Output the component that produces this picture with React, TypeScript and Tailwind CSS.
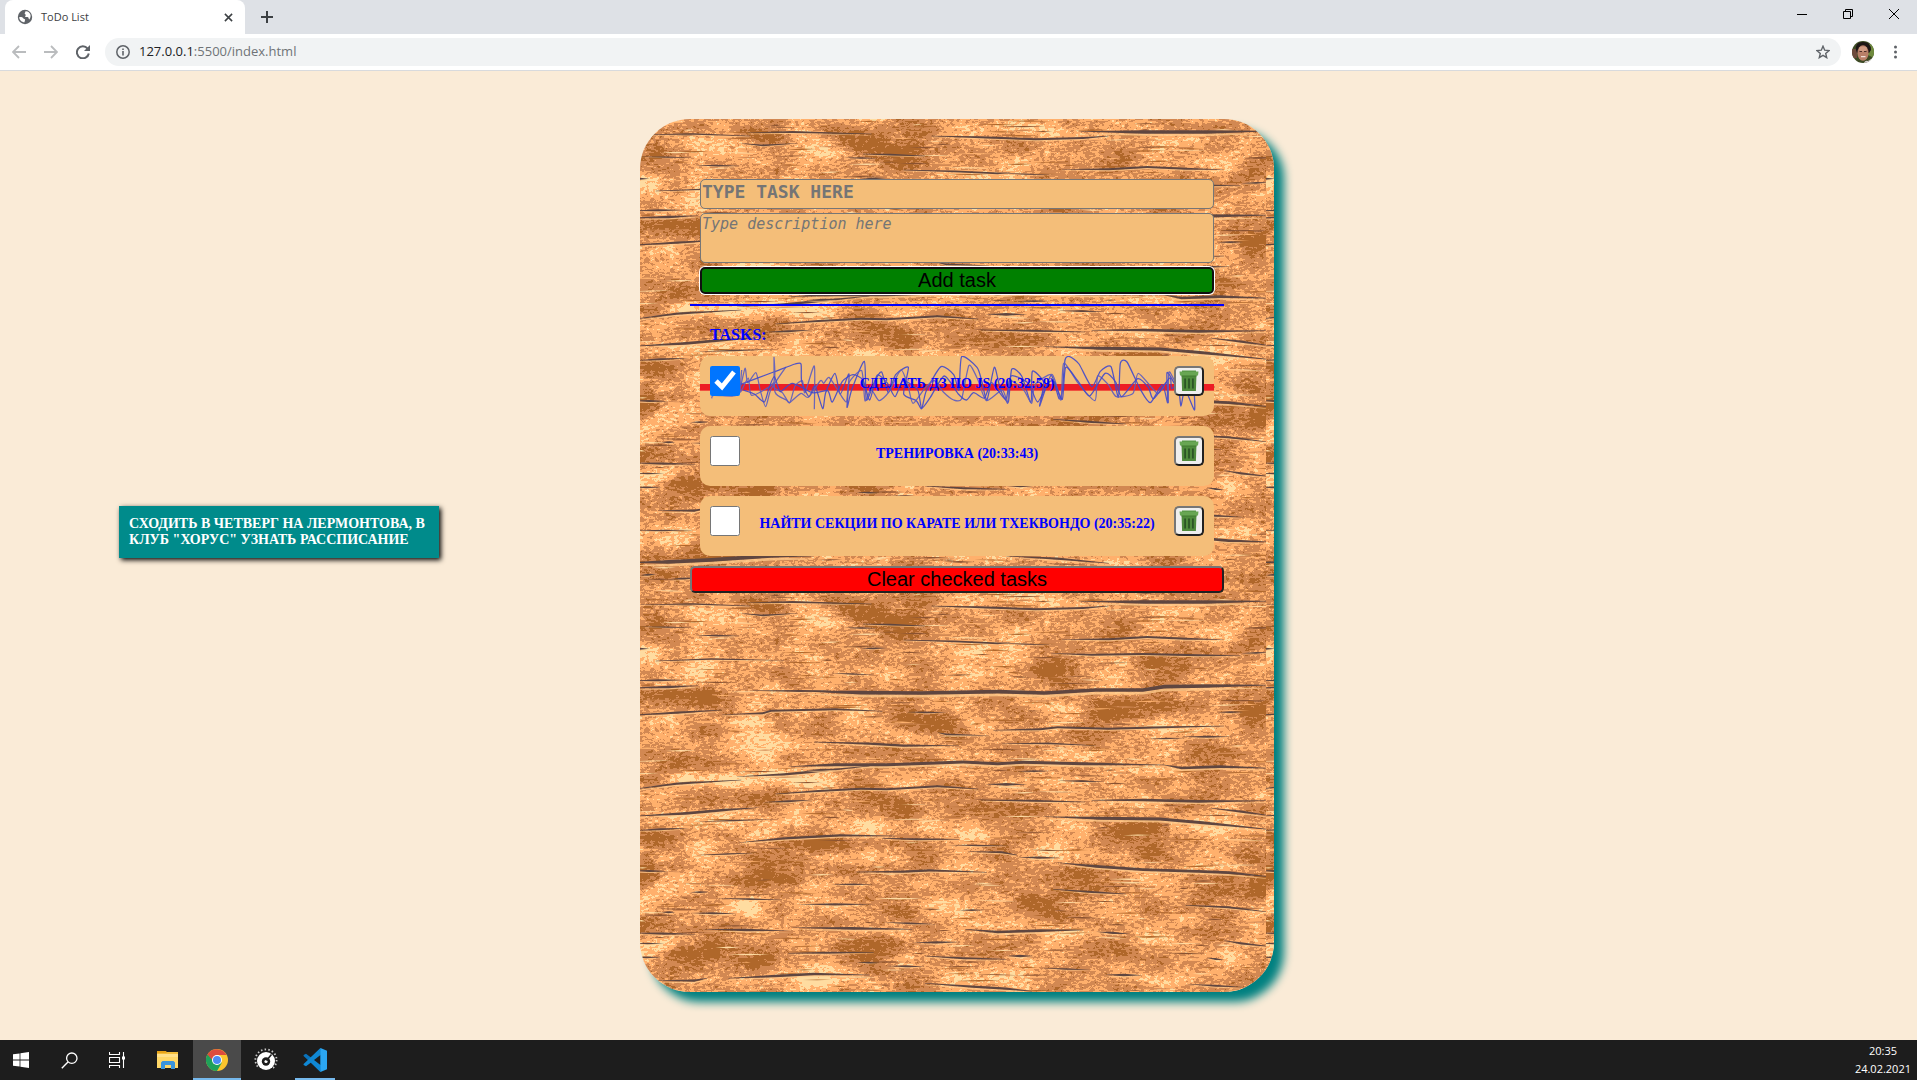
import { useState } from "react";
import type { FormEvent, ReactNode } from "react";

type Crack = { t: number; p: number[] };

const cracks: Crack[] = [
  { t: 3, p: [23, 44, 150, 42, 280, 48] },
  { t: 4, p: [275, 38, 380, 36, 565, 42] },
  { t: 4, p: [705, 48, 820, 52, 950, 58, 1060, 54, 1120, 48] },
  { t: 8, p: [1050, 34, 1200, 36, 1350, 36, 1500, 33] },
  { t: 3, p: [260, 70, 310, 76, 390, 70] },
  { t: 2, p: [23, 110, 150, 113] },
  { t: 3, p: [150, 136, 260, 138] },
  { t: 3, p: [640, 150, 760, 154, 860, 160, 890, 158] },
  { t: 2, p: [860, 160, 990, 165] },
  { t: 4, p: [1010, 148, 1120, 148, 1210, 141, 1300, 146, 1390, 149] },
  { t: 4, p: [985, 190, 1080, 194, 1200, 192, 1330, 196, 1430, 197] },
  { t: 3, p: [1430, 190, 1500, 187] },
  { t: 4, p: [0, 177, 45, 176] },
  { t: 3, p: [60, 213, 190, 207, 360, 211] },
  { t: 3, p: [470, 250, 570, 254] },
  { t: 4, p: [0, 272, 135, 270] },
  { t: 5, p: [0, 294, 90, 291, 160, 287] },
  { t: 4, p: [280, 302, 400, 303, 470, 302] },
  { t: 9, p: [400, 303, 540, 308, 680, 309, 860, 305, 970, 309, 1090, 300, 1200, 300, 1250, 290, 1350, 288, 1500, 285] },
  { t: 5, p: [0, 376, 110, 368, 215, 360] },
  { t: 4, p: [215, 374, 310, 370, 330, 362, 480, 358, 590, 364] },
  { t: 3, p: [645, 366, 740, 368] },
  { t: 3, p: [1375, 367, 1435, 366] },
  { t: 4, p: [850, 421, 960, 418, 1000, 412, 1120, 416, 1250, 412, 1390, 408] },
  { t: 3, p: [545, 102, 610, 104, 690, 108] },
  { t: 3, p: [500, 113, 580, 115] },
  { t: 3, p: [540, 176, 600, 174] },
  { t: 3, p: [720, 428, 740, 433, 840, 437] },
  { t: 3, p: [1210, 447, 1300, 444] },
  { t: 4, p: [1290, 440, 1410, 440] },
  { t: 5, p: [430, 456, 560, 461, 640, 467, 770, 467] },
  { t: 3, p: [870, 461, 980, 460, 1090, 467] },
  { t: 7, p: [370, 530, 480, 524, 600, 524, 780, 516, 860, 521, 920, 517, 1060, 521, 1250, 525] },
  { t: 6, p: [1245, 524, 1290, 534, 1380, 530, 1500, 535] },
  { t: 5, p: [250, 560, 360, 553, 420, 546, 560, 528] },
  { t: 4, p: [410, 541, 490, 537] },
  { t: 5, p: [0, 599, 110, 581, 260, 570] },
  { t: 3, p: [905, 544, 985, 543] },
  { t: 6, p: [830, 583, 930, 583] },
  { t: 3, p: [1000, 572, 1110, 575] },
  { t: 4, p: [340, 612, 440, 603, 540, 596, 600, 598, 720, 589, 815, 597] },
  { t: 4, p: [310, 637, 430, 630] },
  { t: 4, p: [820, 630, 940, 632, 1065, 636] },
  { t: 6, p: [1080, 631, 1200, 630, 1330, 634, 1500, 632] },
  { t: 6, p: [0, 679, 130, 670, 220, 660, 300, 653] },
  { t: 3, p: [150, 695, 340, 688] },
  { t: 4, p: [0, 722, 140, 714] },
  { t: 7, p: [965, 680, 1100, 685, 1240, 687, 1340, 698, 1500, 719] },
  { t: 5, p: [1360, 655, 1430, 665, 1500, 678] },
  { t: 5, p: [255, 758, 360, 745, 490, 736, 620, 738] },
  { t: 4, p: [590, 745, 670, 748, 770, 748] },
  { t: 3, p: [740, 765, 890, 768] },
  { t: 4, p: [790, 785, 870, 787, 905, 795] },
  { t: 5, p: [905, 802, 1010, 804] },
  { t: 6, p: [1000, 818, 1090, 829, 1200, 839, 1330, 844, 1400, 848, 1500, 861] },
  { t: 4, p: [0, 842, 90, 844] },
  { t: 5, p: [530, 846, 640, 845, 700, 841, 835, 847] },
  { t: 3, p: [150, 796, 300, 788] },
  { t: 3, p: [470, 883, 570, 883] },
  { t: 3, p: [140, 907, 185, 906] },
  { t: 4, p: [990, 898, 1080, 906, 1160, 912] },
  { t: 3, p: [200, 925, 360, 930] },
  { t: 4, p: [1300, 946, 1400, 952, 1500, 967] },
  { t: 5, p: [390, 943, 570, 943] },
  { t: 4, p: [75, 967, 105, 967] },
  { t: 4, p: [140, 969, 250, 971] },
  { t: 3, p: [770, 961, 830, 960] },
  { t: 3, p: [590, 997, 720, 1003] },
  { t: 5, p: [165, 1018, 380, 1022] },
  { t: 6, p: [380, 1013, 520, 1015, 660, 1018] },
  { t: 6, p: [785, 1018, 860, 1026, 960, 1022, 1060, 1020] },
  { t: 5, p: [1090, 1025, 1170, 1032] },
  { t: 5, p: [0, 1029, 160, 1033] },
  { t: 5, p: [660, 1058, 775, 1056] },
  { t: 3, p: [0, 1060, 80, 1061] },
  { t: 5, p: [1390, 1052, 1430, 1060, 1500, 1070] },
  { t: 4, p: [370, 1090, 460, 1088, 570, 1087] },
  { t: 4, p: [690, 1098, 780, 1105, 880, 1108] },
  { t: 5, p: [880, 1098, 945, 1098] },
  { t: 3, p: [0, 1102, 75, 1102] },
  { t: 4, p: [1350, 1104, 1390, 1110] },
  { t: 3, p: [530, 1117, 585, 1119] },
  { t: 4, p: [600, 1128, 690, 1130] },
  { t: 3, p: [960, 1134, 1080, 1140] },
  { t: 5, p: [1110, 1154, 1200, 1156] },
  { t: 5, p: [65, 1172, 150, 1172, 180, 1165] },
  { t: 5, p: [230, 1165, 340, 1158, 430, 1152, 560, 1155] },
  { t: 5, p: [690, 1180, 800, 1190, 880, 1196, 940, 1204] },
  { t: 4, p: [1300, 1182, 1440, 1192] },
  { t: 3, p: [0, 1233, 150, 1230] },
  { t: 9, p: [0, 1328, 90, 1326, 190, 1320, 330, 1308, 430, 1308] },
  { t: 5, p: [880, 1308, 1000, 1316, 1120, 1330] },
  { t: 4, p: [23, 1366, 60, 1363] },
  { t: 4, p: [90, 1378, 160, 1374] },
  { t: 6, p: [1080, 1240, 1260, 1246, 1400, 1262, 1500, 1266] },
];

// x, y, rx, ry
const darkSpots = [
  [120, 328, 120, 34], [780, 90, 50, 24], [590, 60, 110, 50], [975, 215, 45, 50], [640, 130, 60, 26],
  [1440, 345, 55, 55], [165, 525, 55, 24], [600, 660, 90, 34], [720, 610, 50, 18], [1205, 745, 50, 60],
  [350, 805, 70, 34], [200, 1105, 130, 46], [50, 755, 50, 34], [1080, 875, 110, 50], [1430, 890, 90, 40],
  [635, 980, 55, 34], [1060, 445, 50, 40], [690, 385, 80, 40], [1250, 235, 90, 34], [880, 660, 120, 30],
  [1350, 490, 70, 30], [960, 955, 60, 40], [560, 1070, 90, 40], [450, 760, 150, 24], [1460, 790, 40, 40],
  [90, 1010, 90, 16], [40, 840, 30, 60], [180, 1300, 130, 26], [60, 1360, 70, 30], [1380, 1130, 60, 20],
  [290, 50, 80, 26], [1180, 360, 130, 34], [300, 870, 110, 20], [1200, 1290, 120, 30],
];
const lightSpots = [
  [130, 200, 130, 50], [440, 260, 70, 22], [430, 460, 60, 26], [270, 460, 110, 44], [830, 240, 80, 22],
  [250, 680, 160, 34], [750, 545, 60, 22], [820, 735, 40, 22], [1140, 650, 120, 20], [970, 1090, 80, 34],
  [740, 960, 50, 60], [520, 1000, 34, 40], [120, 880, 60, 44], [1440, 1095, 60, 44], [800, 180, 50, 26],
  [180, 70, 110, 24], [900, 30, 140, 20], [1180, 545, 110, 18], [250, 570, 160, 24], [1210, 1060, 60, 34],
  [260, 960, 60, 26], [1000, 630, 100, 20], [1330, 830, 120, 14], [80, 1250, 90, 40], [400, 1180, 90, 20],
  [1350, 60, 110, 16], [100, 620, 80, 20], [200, 395, 160, 14],
];

function sliver(p: number[], t: number, dy: number) {
  const n = p.length / 2;
  const top: string[] = [];
  const bottom: string[] = [];
  for (let i = 0; i < n; i++) {
    const half = i === 0 || i === n - 1 ? 0.6 : t / 2;
    top.push(`${p[i * 2]} ${p[i * 2 + 1] - half + dy}`);
    bottom.unshift(`${p[i * 2]} ${p[i * 2 + 1] + half + dy}`);
  }
  if (n === 2) {
    const mx = (p[0] + p[2]) / 2;
    const my = (p[1] + p[3]) / 2 + dy;
    return `M${p[0]} ${p[1] + dy}L${mx} ${my - t / 2}L${p[2]} ${p[3] + dy}L${mx} ${my + t / 2}Z`;
  }
  return `M${top.join("L")}L${bottom.join("L")}Z`;
}

const streakTones = ["#b0672b", "#b0672b", "#ffdca2", "#ffb26e", "#8a5230", "#d38a55"];

function makeStreaks(count: number) {
  let seed = 71;
  const next = () => {
    seed = (seed * 16807) % 2147483647;
    return seed / 2147483647;
  };
  return Array.from({ length: count }, () => {
    const x = next() * 1460;
    const y = next() * 1400;
    const len = 20 + next() * 90;
    const slope = (next() - 0.5) * 6;
    return {
      d: sliver([x, y, x + len, y + slope], 2.4 + next() * 2.4, 0),
      fill: streakTones[Math.floor(next() * streakTones.length)],
    };
  });
}

const streaks = makeStreaks(620);

function Wood() {
  return (
    <svg className="absolute inset-0 h-full w-full rounded-[50px]" aria-hidden="true">
      <defs>
        <filter id="soften" x="-60%" y="-60%" width="220%" height="220%">
          <feGaussianBlur stdDeviation="16 9" />
        </filter>
        <filter id="grain" filterUnits="userSpaceOnUse" x="0" y="0" width="626" height="470" colorInterpolationFilters="sRGB">
          <feTurbulence type="fractalNoise" baseFrequency="0.02 0.04" numOctaves="5" seed="31" result="wide" />
          <feColorMatrix in="wide" values="1 0 0 0 0 1 0 0 0 0 1 0 0 0 0 0 0 0 0 1" result="wideGray" />
          <feTurbulence type="fractalNoise" baseFrequency="0.2 0.4" numOctaves="3" seed="9" result="fine" />
          <feColorMatrix in="fine" values="1 0 0 0 0 1 0 0 0 0 1 0 0 0 0 0 0 0 0 1" result="fineGray" />
          <feComposite in="wideGray" in2="fineGray" operator="arithmetic" k2="0.6" k3="0.5" k4="-0.05" result="noise" />
          <feComposite in="SourceGraphic" in2="noise" operator="arithmetic" k2="1" k3="1" k4="-0.5" result="sum" />
          <feColorMatrix in="sum" values="1 0 0 0 0 0 1 0 0 0 0 0 1 0 0 0 0 0 0 1" />
          <feComponentTransfer>
            <feFuncR type="discrete" tableValues=".69 .69 .69 .69 .69 .69 .69 .69 .827 .827 .827 1 1 1 1 1 1 1 1 1" />
            <feFuncG type="discrete" tableValues=".404 .404 .404 .404 .404 .404 .404 .404 .537 .537 .537 .694 .694 .694 .863 .863 .863 .863 .863 .863" />
            <feFuncB type="discrete" tableValues=".165 .165 .165 .165 .165 .165 .165 .165 .325 .325 .325 .427 .427 .427 .63 .63 .63 .63 .63 .63" />
          </feComponentTransfer>
        </filter>
        <pattern id="planks" patternUnits="userSpaceOnUse" width="626" height="470">
          <g filter="url(#grain)">
            <rect width="626" height="470" fill="#8b8b8b" />
            <g transform="scale(0.4273 0.3333) translate(-23 3)" filter="url(#soften)">
              {darkSpots.map(([x, y, rx, ry]) => (
                <ellipse key={`${x}-${y}`} cx={x} cy={y} rx={rx} ry={ry} fill="#565656" opacity="0.75" />
              ))}
              {lightSpots.map(([x, y, rx, ry]) => (
                <ellipse key={`${x}-${y}`} cx={x} cy={y} rx={rx} ry={ry} fill="#b4b4b4" opacity="0.75" />
              ))}
            </g>
          </g>
          <g transform="scale(0.4273 0.3333) translate(-23 3)">
            {streaks.map((s, i) => (
              <path key={i} d={s.d} fill={s.fill} />
            ))}
            {cracks.map((c, i) => (
              <g key={i}>
                <path d={sliver(c.p, c.t, c.t)} fill="#ffc98a" opacity="0.8" />
                <path d={sliver(c.p, c.t + 2, 0)} fill="#5f4640" />
              </g>
            ))}
          </g>
        </pattern>
      </defs>
      <rect width="100%" height="100%" fill="url(#planks)" />
    </svg>
  );
}

const scribbles = [
  [50, 145, 56, 136, 112, 138, 132, 128, 150, 55, 158, 98, 183, 68, 196, 122, 212, 170, 228, 118, 272, 52, 236, 108, 262, 128, 284, 158, 300, 108, 322, 92, 330, 128, 358, 48, 358, 178],
  [135, 104, 236, 66, 300, 42, 318, 42, 320, 94, 342, 140, 360, 108, 383, 176, 392, 128, 420, 70, 436, 132, 462, 72, 456, 172, 470, 120, 508, 34, 514, 150, 540, 92, 560, 66, 580, 128, 602, 74, 640, 52, 626, 132, 664, 152, 680, 176, 694, 122, 738, 50, 776, 74, 792, 120, 800, 20, 846, 52, 860, 92, 876, 150, 898, 52, 916, 118, 940, 156, 950, 58, 980, 78, 1008, 158, 1012, 64, 1046, 98, 1034, 168, 1068, 76, 1092, 146, 1102, 122, 1110, 30, 1124, 20, 1152, 42, 1190, 110, 1216, 64, 1248, 50, 1270, 142, 1276, 40, 1296, 36, 1336, 118, 1366, 158, 1402, 104, 1418, 158, 1416, 68, 1438, 100, 1452, 124, 1458, 168, 1470, 118, 1498, 180, 1498, 130],
  [140, 60, 136, 126, 160, 84, 170, 136, 236, 98, 237, 22, 240, 126, 274, 150, 284, 158, 318, 130, 340, 142, 376, 92, 386, 100, 402, 82, 428, 120, 454, 156, 462, 98, 500, 62, 510, 152, 528, 118, 552, 152, 580, 128, 618, 60, 640, 112, 654, 160, 690, 114, 718, 92, 745, 126, 776, 150, 800, 146, 822, 46, 848, 88, 874, 152, 922, 120, 938, 160, 944, 92, 986, 120, 1010, 160, 1020, 104, 1072, 74, 1098, 150, 1106, 40, 1150, 100, 1200, 152, 1208, 78, 1240, 104, 1264, 140, 1314, 130, 1330, 70, 1388, 130, 1416, 96, 1420, 158, 1422, 66, 1448, 108, 1484, 126],
  [145, 120, 178, 132, 208, 156, 222, 114, 238, 80, 256, 124, 292, 100, 352, 128, 398, 122, 412, 156, 442, 94, 474, 74, 504, 90, 524, 150, 546, 76, 576, 98, 600, 140, 624, 92, 668, 120, 680, 174, 706, 142, 748, 78, 790, 132, 814, 150, 836, 128, 868, 144, 890, 98, 932, 148, 948, 78, 1000, 100, 1028, 156, 1060, 98, 1078, 96, 1102, 148, 1112, 52, 1148, 92, 1184, 138, 1230, 70, 1262, 96, 1280, 140, 1328, 86, 1360, 112, 1376, 146, 1424, 84, 1430, 116, 1454, 92],
];

// Catmull-Rom spline through the points, slightly tightened
function smooth(p: number[]) {
  const n = p.length / 2;
  const at = (i: number) => {
    const k = Math.max(0, Math.min(n - 1, i));
    return [p[k * 2], p[k * 2 + 1]];
  };
  let d = `M${p[0]} ${p[1]}`;
  for (let i = 0; i < n - 1; i++) {
    const [a, b, c, e] = [at(i - 1), at(i), at(i + 1), at(i + 2)];
    d += `C${b[0] + (c[0] - a[0]) / 9} ${b[1] + (c[1] - a[1]) / 9} ${c[0] - (e[0] - b[0]) / 9} ${c[1] - (e[1] - b[1]) / 9} ${c[0]} ${c[1]}`;
  }
  return d;
}

function CrossedOut() {
  return (
    <svg className="absolute inset-0 h-full w-full" viewBox="15 18 1542 180" preserveAspectRatio="none" aria-hidden="true">
      <rect x="15" y="102" width="1542" height="20" fill="#ed1c24" />
      {scribbles.map((p, i) => (
        <path
          key={i}
          d={smooth(p)}
          fill="none"
          stroke={i % 2 ? "#3f48cc" : "#5c5cc0"}
          strokeOpacity="0.9"
          strokeWidth="3.8"
          strokeLinejoin="round"
        />
      ))}
    </svg>
  );
}

function TrashIcon() {
  return (
    <svg viewBox="0 0 22 24" className="h-6 w-[22px]" aria-hidden="true">
      <path d="M3.500 5h15l-.6 17H4.100z" fill="#4f8b3c" />
      <path d="M3.500 6h15v1.500h-15z" fill="#427a31" />
      <path d="M1.500 2.500h19l-.5 4H2z" fill="#68a653" />
      <path d="M4 1.500h14v1.500H4z" fill="#5b9a49" />
      <path d="M6.200 9.500h1.800v10H6.200zM10.100 9.500h1.800v10h-1.800zM14 9.500h1.800v10H14z" fill="#2c5526" />
    </svg>
  );
}

function TabBar() {
  return (
    <header className="flex h-[34px] items-stretch bg-[#dee1e6]">
      <div className="relative ml-[5px] flex w-60 items-center rounded-t-lg bg-white pr-3 pl-3 font-['Open_Sans',sans-serif] text-[#3c4043]">
        <svg viewBox="0 0 16 16" className="size-4" aria-hidden="true">
          <circle cx="8" cy="8" r="7.200" fill="#5f6368" />
          <path d="M2.200 8.200c1.800-.4 3.400.2 4.200 1.200.5.6 1.500.3 1.700 1.100.2.900-.6 1.300-.5 2.700-3 0-5.200-2.200-5.400-5zM8.300 2.300c.6.900-.5 1.300-.6 2.100-.1.800 1 .6 1.100 1.500.1.800-.9.900-.7 1.600.4 1 2.200.2 3 .8.700.6.400 1.700 1.200 2.200 1.200-1.500 1.700-3.400 1-5.200-.6-1.700-2.200-3.300-5-3z" fill="#fff" />
        </svg>
        <span className="ml-2 flex-1 text-[11px]">ToDo List</span>
        <button type="button" aria-label="Close tab" className="p-0">
          <svg viewBox="0 0 10 10" className="size-[9px]" aria-hidden="true">
            <path d="M1 1l8 8M9 1L1 9" stroke="#3c4043" strokeWidth="1.700" />
          </svg>
        </button>
      </div>
      <button type="button" aria-label="New tab" className="ml-4 self-center">
        <svg viewBox="0 0 12 12" className="size-3" aria-hidden="true">
          <path d="M6 0v12M0 6h12" stroke="#3c4043" strokeWidth="2" />
        </svg>
      </button>
      <div className="ml-auto flex items-center pb-1.5">
        <button type="button" aria-label="Minimize" className="flex w-[46px] justify-center">
          <svg viewBox="0 0 10 10" className="size-2.5" aria-hidden="true">
            <path d="M0 5.500h10" stroke="#000" />
          </svg>
        </button>
        <button type="button" aria-label="Restore" className="flex w-[46px] justify-center">
          <svg viewBox="0 0 10 10" className="size-2.5" aria-hidden="true">
            <path d="M.5 2.500h7v7h-7zM2.500 2.500v-2h7v7h-2" fill="none" stroke="#000" />
          </svg>
        </button>
        <button type="button" aria-label="Close" className="flex w-[46px] justify-center">
          <svg viewBox="0 0 10 10" className="size-2.5" aria-hidden="true">
            <path d="M0 0l10 10M10 0L0 10" stroke="#000" />
          </svg>
        </button>
      </div>
    </header>
  );
}

function Toolbar() {
  return (
    <nav className="flex h-[37px] items-center border-b border-[#d8dadd] bg-white pl-3">
      <button type="button" aria-label="Back">
        <svg viewBox="0 0 14 14" className="size-3.5" aria-hidden="true">
          <path d="M14 7H1.500M7 1L1 7l6 6" fill="none" stroke="#babcbe" strokeWidth="1.800" />
        </svg>
      </button>
      <button type="button" aria-label="Forward" className="ml-[18px]">
        <svg viewBox="0 0 14 14" className="size-3.5" aria-hidden="true">
          <path d="M0 7h12.500M7 1l6 6-6 6" fill="none" stroke="#babcbe" strokeWidth="1.800" />
        </svg>
      </button>
      <button type="button" aria-label="Reload" className="ml-[18px]">
        <svg viewBox="0 0 14 14" className="size-3.5" aria-hidden="true">
          <path d="M11.600 3.600A6 6 0 1 0 12.800 8.500" fill="none" stroke="#5f6368" strokeWidth="2" />
          <path d="M14 0v6H8z" fill="#5f6368" />
        </svg>
      </button>
      <div className="ml-[15px] flex h-7 flex-1 items-center rounded-full bg-[#f1f3f4] px-[11px]">
        <svg viewBox="0 0 14 14" className="size-3.5" aria-hidden="true">
          <circle cx="7" cy="7" r="6.200" fill="none" stroke="#5f6368" strokeWidth="1.500" />
          <path d="M6.200 6h1.600v4.500H6.200zM6.200 3.500h1.600V5H6.200z" fill="#5f6368" />
        </svg>
        <span className="ml-[9px] flex-1 font-['Open_Sans',sans-serif] text-[13px] text-[#6f7377]">
          <span className="text-[#202124]">127.0.0.1</span>:5500/index.html
        </span>
        <button type="button" aria-label="Bookmark this page">
          <svg viewBox="0 0 14 14" className="size-3.5" aria-hidden="true">
            <path d="M7 1.200l1.700 4 4.300.4-3.300 2.800 1 4.200L7 10.300l-3.700 2.300 1-4.200L1 5.600l4.300-.4z" fill="none" stroke="#5f6368" strokeWidth="1.400" />
          </svg>
        </button>
      </div>
      <svg viewBox="0 0 22 22" className="ml-[11px] size-[22px] rounded-full" role="img" aria-label="Profile">
        <rect width="22" height="22" fill="#3d4a24" />
        <path d="M13 3h9v14l-6-3z" fill="#6f8a3e" />
        <path d="M0 8h5v9H0z" fill="#6d4a3c" />
        <path d="M4 9Q3 1 11 1t8 8l-2 3H5z" fill="#1d1716" />
        <ellipse cx="11" cy="12" rx="5.600" ry="7.800" fill="#b87f68" />
        <ellipse cx="11" cy="8" rx="4" ry="2.400" fill="#d09c84" />
        <path d="M7.500 10.500h2.500M12 10.500h2.500" stroke="#4b2d25" />
        <path d="M9 15.700h4.500" stroke="#f1ddd6" strokeWidth="1.200" />
        <path d="M12 22q1-3 4-2l3-2 2 4z" fill="#d9cfd2" />
      </svg>
      <button type="button" aria-label="Menu" className="mr-5 ml-5">
        <svg viewBox="0 0 3 14" className="h-3.5 w-[3px]" aria-hidden="true">
          <circle cx="1.500" cy="2" r="1.500" fill="#5f6368" />
          <circle cx="1.500" cy="7" r="1.500" fill="#5f6368" />
          <circle cx="1.500" cy="12" r="1.500" fill="#5f6368" />
        </svg>
      </button>
    </nav>
  );
}

function TaskbarSlot({ label, active, running, wide, children }: { label: string; active?: boolean; running?: boolean; wide?: boolean; children: ReactNode }) {
  return (
    <button
      type="button"
      aria-label={label}
      className={`relative flex h-10 items-center justify-center ${wide ? "w-[42px]" : "w-12"} ${active ? "bg-[#4a4a4a]" : ""}`}
    >
      {children}
      {active && <span className="absolute inset-x-0 bottom-0 h-0.5 bg-[#76b9ed]" />}
      {running && <span className="absolute inset-x-1 bottom-0 h-0.5 bg-[#76b9ed]" />}
    </button>
  );
}

function Taskbar() {
  return (
    <footer className="flex h-10 items-center bg-[#1d1d1d]">
      <TaskbarSlot label="Start" wide>
        <svg viewBox="0 0 16 16" className="size-4" aria-hidden="true">
          <path d="M0 2.300L6.600 1.400V7.600H0zM7.400 1.300L16 0v7.600H7.400zM0 8.400h6.600v6.200L0 13.700zM7.400 8.400H16V16l-8.600-1.300z" fill="#fff" />
        </svg>
      </TaskbarSlot>
      <div className="ml-[3px] flex">
        <TaskbarSlot label="Search">
          <svg viewBox="0 0 17 17" className="size-[17px]" aria-hidden="true">
            <circle cx="10.800" cy="6.200" r="5.200" fill="none" stroke="#fff" strokeWidth="1.300" />
            <path d="M7 10L.8 16.200" stroke="#fff" strokeWidth="1.400" />
          </svg>
        </TaskbarSlot>
        <TaskbarSlot label="Task View">
          <svg viewBox="0 0 16 16" className="size-4" aria-hidden="true">
            <path d="M.5 0v2.500h10V0M.5 5.500h10v5H.5zM.5 16v-2.500h10V16M14.500 0v16" fill="none" stroke="#fff" strokeWidth="1.100" />
            <rect x="13" y="4.500" width="3" height="3" fill="#fff" />
          </svg>
        </TaskbarSlot>
      </div>
      <div className="ml-[3px] flex gap-px">
        <TaskbarSlot label="File Explorer">
          <svg viewBox="0 0 22 18" className="h-[18px] w-[22px]" aria-hidden="true">
            <path d="M0 0h9l1.500 2H0z" fill="#e8a317" />
            <path d="M0 2h21v15H0z" fill="#ffd767" />
            <path d="M0 2h9l1-1h11v3H0z" fill="#f3bd3a" />
            <path d="M0 3h21v3H0z" fill="#ffe08a" />
            <path d="M4 18v-6.500l1.500-1.500h11l1.500 1.500V18h-4v-4H8v4z" fill="#3a94db" />
          </svg>
        </TaskbarSlot>
        <TaskbarSlot label="Chrome" active>
          <svg viewBox="0 0 22 22" className="size-[22px]" aria-hidden="true">
            <circle cx="11" cy="11" r="11" fill="#fbc52d" />
            <path d="M11 11L1.470 5.500A11 11 0 0 0 11 22l4.800-8.300z" fill="#1fa15a" />
            <path d="M11 11H6.200L1.470 5.500A11 11 0 0 1 20.530 6H11z" fill="#dc4b3e" />
            <circle cx="11" cy="11" r="5" fill="#fff" />
            <circle cx="11" cy="11" r="4" fill="#4a8af4" />
          </svg>
        </TaskbarSlot>
        <TaskbarSlot label="Sound control">
          <svg viewBox="0 0 24 24" className="size-6" aria-hidden="true">
            <circle cx="12" cy="12" r="10.600" fill="none" stroke="#c9c9c9" strokeWidth="1.800" strokeDasharray="1.500 2.200" pathLength="66" />
            <path d="M5 19h14v5H5z" fill="#1d1d1d" />
            <circle cx="12" cy="13" r="9" fill="#fff" />
            <circle cx="12" cy="13.500" r="4.200" fill="#1d1d1d" />
            <circle cx="12" cy="13.500" r="1.600" fill="#fff" />
            <path d="M12.500 12.500l5-6" stroke="#1d1d1d" strokeWidth="1.600" />
          </svg>
        </TaskbarSlot>
        <TaskbarSlot label="Visual Studio Code" running>
          <svg viewBox="0 0 24 24" className="size-6" aria-hidden="true">
            <path d="M17.500 0L8 9.500 3 5.700.6 6.900v1L17.500 24l1-6z" fill="#0a72ba" />
            <path d="M17.500 24L8 14.500l-5 3.800L.6 17.100v-1L17.500 0l1 6z" fill="#1088d4" />
            <path d="M17.500 7L11 12l6.500 5z" fill="#1d1d1d" />
            <path d="M17.500 0L24 2.800v18.400L17.500 24z" fill="#2ba6f2" />
          </svg>
        </TaskbarSlot>
      </div>
      <div className="ml-auto pr-[6px] pb-px text-center font-['Open_Sans',sans-serif] text-[11px] leading-[18px] text-white">
        <div>20:35</div>
        <div>24.02.2021</div>
      </div>
    </footer>
  );
}

type Task = { id: number; title: string; time: string; done: boolean };

const initialTasks: Task[] = [
  { id: 1, title: "СДЕЛАТЬ ДЗ ПО JS", time: "20:32:59", done: true },
  { id: 2, title: "ТРЕНИРОВКА", time: "20:33:43", done: false },
  { id: 3, title: "НАЙТИ СЕКЦИИ ПО КАРАТЕ ИЛИ ТХЕКВОНДО", time: "20:35:22", done: false },
];

export default function App() {
  const [tasks, setTasks] = useState<Task[]>(initialTasks);
  const [title, setTitle] = useState("");
  const [details, setDetails] = useState("");

  const addTask = (event: FormEvent) => {
    event.preventDefault();
    if (!title.trim()) return;
    const time = new Date().toTimeString().slice(0, 8);
    setTasks([...tasks, { id: Date.now(), title: title.toUpperCase(), time, done: false }]);
    setTitle("");
    setDetails("");
  };

  return (
    <div className="flex min-h-screen flex-col bg-[#faebd7]">
      <TabBar />
      <Toolbar />

      <main className="grid flex-1 grid-cols-[1fr_minmax(0,634px)_1fr] py-12 pr-[3px]">
        <aside className="mt-[387px] mr-auto ml-[119px] w-80 self-start bg-[#008b8b] p-2.5 font-['Liberation_Serif',serif] text-[14px] leading-4 font-bold text-white shadow-[2px_2px_5px_#000]">
          СХОДИТЬ В ЧЕТВЕРГ НА ЛЕРМОНТОВА, В КЛУБ "ХОРУС" УЗНАТЬ РАССПИСАНИЕ
        </aside>

        <section className="relative rounded-[50px] px-[50px] pt-[60px] pb-[60px] shadow-[10px_10px_10px_#008080]">
          <Wood />
          <div className="relative">
            <form onSubmit={addTask} className="flex flex-col gap-1 px-2.5">
              <input
                type="text"
                aria-label="Task"
                placeholder="TYPE TASK HERE"
                value={title}
                onChange={(e) => setTitle(e.target.value)}
                className="h-[30px] rounded-[5px] border border-[#767676] bg-[#f4be79] px-px pb-1.5 font-['DejaVu_Sans_Mono',monospace] text-[18px] font-bold placeholder:text-[#757575]"
              />
              <textarea
                aria-label="Description"
                placeholder="Type description here"
                value={details}
                onChange={(e) => setDetails(e.target.value)}
                className="h-[50px] resize-none rounded-[5px] border border-[#767676] bg-[#f4be79] px-px py-0.5 font-['DejaVu_Sans_Mono',monospace] text-[15px] leading-4 italic placeholder:text-[#757575]"
              />
              <button
                type="submit"
                className="h-[27px] rounded-[5px] border-2 border-[#101010] bg-[#008000] pb-px font-['Liberation_Sans',sans-serif] text-[20px] leading-[22px] text-black ring-1 ring-white"
              >
                Add task
              </button>
            </form>

            <hr className="mt-2.5 border-t-2 border-[#0000ff]" />
            <h2 className="mt-[19px] ml-5 font-['Liberation_Serif',serif] text-[16px] leading-5 font-bold text-[#0000ff]">TASKS:</h2>

            <ul className="mt-[11px] flex flex-col gap-2.5 px-2.5">
              {tasks.map((task) => (
                <li key={task.id} className="relative h-[60px] overflow-hidden rounded-[10px] bg-[#f4be79] p-2.5">
                  {task.done && <CrossedOut />}
                  <div className="relative flex items-start justify-between">
                    <input
                      id={`task-${task.id}`}
                      type="checkbox"
                      checked={task.done}
                      onChange={() => setTasks(tasks.map((t) => (t.id === task.id ? { ...t, done: !t.done } : t)))}
                      className="size-[30px]"
                    />
                    <label
                      htmlFor={`task-${task.id}`}
                      className="mt-2.5 font-['Liberation_Serif',serif] text-[14px] leading-4 font-bold text-[#0000ff]"
                    >
                      {task.title} ({task.time})
                    </label>
                    <button
                      type="button"
                      aria-label={`Delete ${task.title}`}
                      onClick={() => setTasks(tasks.filter((t) => t.id !== task.id))}
                      className="flex size-[30px] items-center justify-center rounded-[5px] border-2 border-t-[#767676] border-r-[#212121] border-b-[#212121] border-l-[#767676] bg-[#efefef]"
                    >
                      <TrashIcon />
                    </button>
                  </div>
                </li>
              ))}
            </ul>

            <button
              type="button"
              onClick={() => setTasks(tasks.filter((t) => !t.done))}
              className="mt-2.5 block h-[27px] w-full rounded-[5px] border-2 border-t-[#767676] border-r-[#212121] border-b-[#212121] border-l-[#767676] bg-[#ff0000] pb-px font-['Liberation_Sans',sans-serif] text-[20px] leading-[22px] text-black"
            >
              Clear checked tasks
            </button>
          </div>
        </section>
      </main>

      <Taskbar />
    </div>
  );
}
